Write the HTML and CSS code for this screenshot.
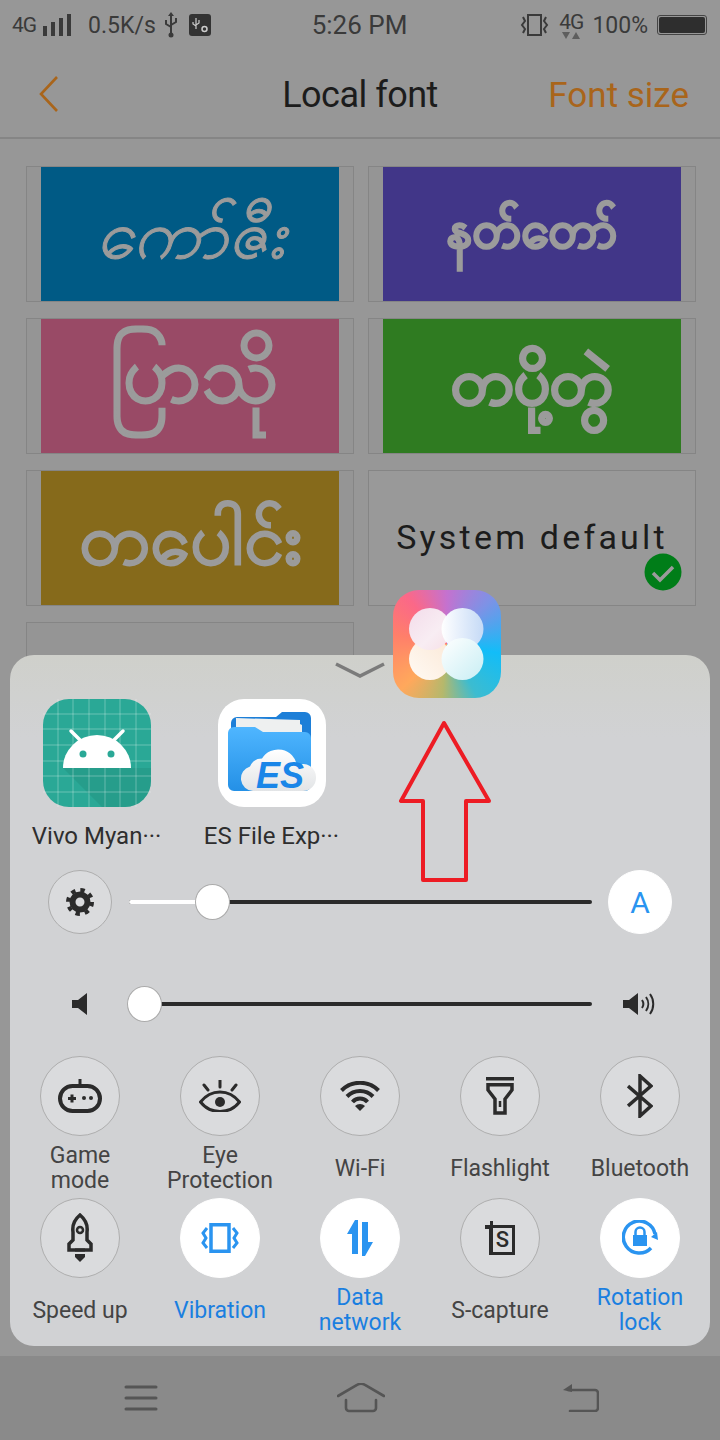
FILE: index.html
```html
<!DOCTYPE html>
<html lang="en">
<head>
    <meta charset="UTF-8">
    <meta name="viewport" content="width=device-width, initial-scale=1.0">
    <title>Local font</title>
    <link rel="stylesheet" href="styles.css">
</head>
<body>

<div class="screen">
    <!-- Status bar -->
    <div class="status-bar">
        <div class="status-left">
            <span class="net">4G</span>
            <svg class="signal" width="28" height="22" viewBox="0 0 28 22"><path d="M0 12h4v10H0zM8 8h4v14H8zM16 4h4v18h-4zM24 0h4v22h-4z" fill="#3a3a3a"/></svg>
            <span class="speed">0.5K/s</span>
            <svg class="usb" width="16" height="26" viewBox="0 0 16 26" fill="none" stroke="#3a3a3a" stroke-width="2"><path d="M8 3v19M3 8v4l5 3M13 6v4l-5 3"/><path d="M8 0l3 4H5z" fill="#3a3a3a" stroke="none"/><circle cx="8" cy="23" r="2.5" fill="#3a3a3a" stroke="none"/></svg>
            <svg class="usb-badge" width="22" height="22" viewBox="0 0 22 22"><rect width="22" height="22" rx="3" fill="#333"/><path d="M7 4v11M4 8v2l3 2M10 6v3l-3 2" fill="none" stroke="#ccc" stroke-width="1.2"/><circle cx="15.500" cy="15" r="2.500" fill="none" stroke="#ccc" stroke-width="1.500"/></svg>
        </div>
        <span class="clock">5:26 PM</span>
        <div class="status-right">
            <svg width="30" height="26" viewBox="0 0 30 26" fill="none" stroke="#3a3a3a" stroke-width="2"><rect x="8" y="3" width="13" height="20"/><path d="M3 5l2 4-3 4 3 4-2 4M26 5l-2 4 3 4-3 4 2 4"/></svg>
            <span class="net-stack"><span class="net">4G</span><span class="net-arrows"><i class="tri-down"></i><i class="tri-up"></i></span></span>
            <span class="speed">100%</span>
            <span class="battery"><span class="battery-fill"></span></span>
        </div>
    </div>

    <!-- Title bar -->
    <div class="title-bar">
        <svg class="back" width="20" height="36" viewBox="0 0 20 36" fill="none" stroke="#a9651b" stroke-width="2.600"><path d="M18 1L2 18l16 17"/></svg>
        <span class="title">Local font</span>
        <span class="title-action">Font size</span>
    </div>

    <!-- Font list -->
    <div class="font-grid">
        <div class="font-card"><div class="swatch swatch-blue"><span class="word word-script">ကော်ဇီး</span></div></div>
        <div class="font-card"><div class="swatch swatch-indigo"><span class="word word-serif">နတ်တော်</span></div></div>
        <div class="font-card"><div class="swatch swatch-rose"><span class="word word-round">ပြာသို</span></div></div>
        <div class="font-card"><div class="swatch swatch-green"><span class="word word-heavy">တပို့တွဲ</span></div></div>
        <div class="font-card"><div class="swatch swatch-ochre"><span class="word word-brush">တပေါင်း</span></div></div>
        <div class="font-card font-card-default">
            <span class="default-name">System default</span>
            <svg class="check" width="38" height="38" viewBox="0 0 38 38"><circle cx="19" cy="19" r="18.500" fill="#007d18"/><path d="M9 20l7 7 13-13" fill="none" stroke="#9b9b9b" stroke-width="3.500"/></svg>
        </div>
        <div class="font-card"></div>
    </div>

    <!-- Control centre sheet -->
    <div class="sheet">
        <div class="sheet-handle">
            <svg width="50" height="16" viewBox="0 0 50 16" fill="none" stroke="#7b7b7b" stroke-width="3.500"><path d="M1 2l24 12L49 2"/></svg>
        </div>

        <div class="recent-apps">
            <div class="recent-app">
                <svg class="app-icon" width="108" height="108" viewBox="0 0 108 108">
                    <rect width="108" height="108" rx="26" fill="#2aa896"/>
                    <path d="M20 69l39 39h23a26 26 0 0 0 26-26V69z" fill="#22917f" opacity=".5"/>
                    <path d="M15 0v108M30 0v108M46 0v108M62 0v108M77 0v108M93 0v108M0 15h108M0 30h108M0 46h108M0 62h108M0 77h108M0 93h108" stroke="#fff" stroke-opacity=".3" stroke-width="1"/>
                    <path d="M20 69a34 33 0 0 1 68 0z" fill="#fff"/>
                    <path d="M28 32l10 10M80 32L70 42" stroke="#fff" stroke-width="3.500" stroke-linecap="round"/>
                    <circle cx="40" cy="55" r="3.500" fill="#2aa896"/><circle cx="68" cy="55" r="3.500" fill="#2aa896"/>
                </svg>
                <span class="app-label">Vivo Myan···</span>
            </div>
            <div class="recent-app">
                <svg class="app-icon" width="108" height="108" viewBox="0 0 108 108">
                    <defs>
                        <linearGradient id="folderFront" x1="0" y1="0" x2="0" y2="1"><stop offset="0" stop-color="#4fb6ff"/><stop offset="1" stop-color="#2490e6"/></linearGradient>
                        <linearGradient id="cloudFill" x1="0" y1="0" x2="0" y2="1"><stop offset="0" stop-color="#fff"/><stop offset="1" stop-color="#e2e4e6"/></linearGradient>
                    </defs>
                    <rect width="108" height="108" rx="26" fill="#fff"/>
                    <path d="M13 24a6 6 0 0 1 6-6h39l6-5h23a6 6 0 0 1 6 6v21H13z" fill="#1d7fd8"/>
                    <path d="M18 19l64 2v4l2 1v9H18z" fill="#eef0f0"/>
                    <path d="M10 34a6 6 0 0 1 6-6h21l8 5h42a6 6 0 0 1 6 6v47a6 6 0 0 1-6 6H16a6 6 0 0 1-6-6z" fill="url(#folderFront)"/>
                    <path d="M35 92a12.500 12.500 0 0 1-3-24.500a13 13 0 0 1 12-8a19 19 0 0 1 35 7a13 13 0 0 1 19 12a13 13 0 0 1-13 13.500z" fill="url(#cloudFill)"/>
                    <text class="es-mark" x="38" y="89">ES</text>
                </svg>
                <span class="app-label">ES File Exp···</span>
            </div>
        </div>

        <div class="slider-row slider-row-light">
            <div class="round-btn round-btn-small">
                <svg width="30" height="30" viewBox="0 0 30 30" fill="none" stroke="#2b2b2b"><circle cx="15" cy="15" r="7.500" stroke-width="6"/><circle cx="15" cy="15" r="12" stroke-width="4" stroke-dasharray="4.420 5"/></svg>
            </div>
            <div class="track"><span class="track-done"></span><span class="thumb"></span></div>
            <div class="round-btn round-btn-small is-on"><span class="auto-a">A</span></div>
        </div>

        <div class="slider-row slider-row-volume">
            <div class="slider-end">
                <svg width="18" height="22" viewBox="0 0 18 22"><path d="M1 7h6l9-7v22l-9-7H1z" fill="#2b2b2b"/></svg>
            </div>
            <div class="track track-volume"><span class="thumb"></span></div>
            <div class="slider-end">
                <svg width="34" height="24" viewBox="0 0 34 24" fill="none" stroke="#2b2b2b" stroke-width="2"><path d="M0 8h6l9-7v22l-9-7H0z" fill="#2b2b2b" stroke="none"/><path d="M19 8a7 7 0 0 1 0 8M23 5a12 12 0 0 1 0 14M27 2a17 17 0 0 1 0 20"/></svg>
            </div>
        </div>

        <div class="toggle-grid">
            <div class="toggle">
                <div class="round-btn">
                    <svg width="44" height="34" viewBox="0 0 44 34" fill="none" stroke="#2b2b2b" stroke-width="4"><path d="M22 0v7" stroke-width="3"/><rect x="2" y="7" width="40" height="25" rx="12.500"/><path d="M10 19.500h8M14 15.500v8" stroke-width="3"/><circle cx="26" cy="19" r="2" fill="#2b2b2b" stroke="none"/><circle cx="33" cy="19" r="2" fill="#2b2b2b" stroke="none"/></svg>
                </div>
                <span class="toggle-label">Game<br>mode</span>
            </div>
            <div class="toggle">
                <div class="round-btn">
                    <svg width="42" height="32" viewBox="0 0 42 32" fill="none" stroke="#2b2b2b" stroke-width="3"><path d="M1.500 22C7 15 14 12 21 12s14 3 19.500 10C35 29 28 31.500 21 31.500S7 29 1.500 22z"/><circle cx="21" cy="22" r="5" fill="#2b2b2b" stroke="none"/><path d="M21 0v7M5 5l4 5M37 5l-4 5" stroke-linecap="round"/></svg>
                </div>
                <span class="toggle-label">Eye<br>Protection</span>
            </div>
            <div class="toggle">
                <div class="round-btn">
                    <svg width="40" height="30" viewBox="0 0 40 30" fill="none" stroke="#2b2b2b" stroke-width="4"><path d="M1.500 9.500a26 26 0 0 1 37 0M7 15.500a18 18 0 0 1 26 0M12.500 21a10 10 0 0 1 15 0"/><path d="M15 25a7 7 0 0 1 10 0l-5 5z" fill="#2b2b2b" stroke="none"/></svg>
                </div>
                <span class="toggle-label">Wi-Fi</span>
            </div>
            <div class="toggle">
                <div class="round-btn">
                    <svg width="28" height="38" viewBox="0 0 28 38" fill="none" stroke="#2b2b2b" stroke-width="3.500"><path d="M0 1.750h28" stroke-width="3.500"/><path d="M2 7.750v5.250l7 9v14h10V22l7-9V7.750z"/><path d="M14 24v6" stroke-width="2.500"/></svg>
                </div>
                <span class="toggle-label">Flashlight</span>
            </div>
            <div class="toggle">
                <div class="round-btn">
                    <svg width="26" height="44" viewBox="0 0 26 44" fill="none" stroke="#2b2b2b" stroke-width="3.500"><path d="M1 12l23 20-11 10V2l11 10L1 32"/></svg>
                </div>
                <span class="toggle-label">Bluetooth</span>
            </div>
            <div class="toggle">
                <div class="round-btn">
                    <svg width="26" height="50" viewBox="0 0 26 50" fill="none" stroke="#2b2b2b" stroke-width="3.500"><path d="M13 2C7 7 5 12 6 19v8l-4 4v6h22v-6l-4-4v-8c1-7-1-12-7-17z"/><path d="M8 37h10" stroke-width="3"/><circle cx="13" cy="17" r="3" stroke-width="2.500"/><path d="M8 41h10v3l-5 5-5-5z" fill="#2b2b2b" stroke="none"/></svg>
                </div>
                <span class="toggle-label">Speed up</span>
            </div>
            <div class="toggle is-on">
                <div class="round-btn">
                    <svg width="38" height="30" viewBox="0 0 38 30" fill="none" stroke="#2a94f0" stroke-width="3.500"><rect x="10" y="1.750" width="18" height="26.500"/><path d="M6 5L2 10l3 5-3 5 4 5M32 5l4 5-3 5 3 5-4 5" stroke-width="3"/></svg>
                </div>
                <span class="toggle-label">Vibration</span>
            </div>
            <div class="toggle is-on">
                <div class="round-btn">
                    <svg width="26" height="36" viewBox="0 0 26 36"><path d="M8 0L0 14h5v20h6V0zM18 36l8-14h-5V2h-6v34z" fill="#2a94f0"/></svg>
                </div>
                <span class="toggle-label">Data<br>network</span>
            </div>
            <div class="toggle">
                <div class="round-btn">
                    <svg width="30" height="34" viewBox="0 0 30 34"><path d="M0 4h5V0h3v4h22v30H4V8H0zM8 7v24h19V7z" fill="#2b2b2b"/><text class="s-mark" x="17.500" y="26">S</text></svg>
                </div>
                <span class="toggle-label">S-capture</span>
            </div>
            <div class="toggle is-on">
                <div class="round-btn">
                    <svg width="36" height="36" viewBox="0 0 36 36" fill="none" stroke="#2a94f0" stroke-width="3.500"><path d="M29 28a16 16 0 1 1 4-14"/><path d="M29 17l6-5 1 8z" fill="#2a94f0" stroke="none"/><rect x="11" y="15" width="14" height="11" fill="#2a94f0" stroke="none"/><path d="M13.500 15v-3a4.500 4.500 0 0 1 9 0v3" stroke-width="2.500"/></svg>
                </div>
                <span class="toggle-label">Rotation<br>lock</span>
            </div>
        </div>
    </div>

    <!-- App being dragged up to the sheet -->
    <svg class="drag-arrow" width="94" height="162" viewBox="0 0 94 162" fill="none" stroke="#ed1c24" stroke-width="4" stroke-linejoin="round"><path d="M46 3L3 81h22v79h43V81h23z"/></svg>
    <div class="drag-icon">
        <svg width="108" height="108" viewBox="0 0 108 108">
            <defs>
                <linearGradient id="petalA" x1="0" y1="0" x2="1" y2="1"><stop offset="0" stop-color="#f3dcea"/><stop offset=".6" stop-color="#f8edf3"/><stop offset="1" stop-color="#f6dfe6"/></linearGradient>
                <linearGradient id="petalB" x1="0" y1="0" x2="1" y2="0"><stop offset="0" stop-color="#fff"/><stop offset="1" stop-color="#c5daf6"/></linearGradient>
                <linearGradient id="petalC" x1="1" y1="0" x2="0" y2="1"><stop offset="0" stop-color="#fbe8d6"/><stop offset="1" stop-color="#fffaf4"/></linearGradient>
                <linearGradient id="petalD" x1="0" y1="0" x2="1" y2="1"><stop offset="0" stop-color="#fff"/><stop offset="1" stop-color="#c8eef4"/></linearGradient>
            </defs>
            <circle cx="37" cy="69" r="21" fill="url(#petalC)"/>
            <circle cx="37" cy="39" r="21" fill="url(#petalA)"/>
            <circle cx="69.500" cy="39" r="21" fill="url(#petalB)"/>
            <circle cx="69.500" cy="69" r="21" fill="url(#petalD)"/>
        </svg>
    </div>

    <!-- Navigation bar -->
    <div class="nav-bar">
        <svg width="34" height="26" viewBox="0 0 34 26" stroke="#555" stroke-width="3" stroke-linecap="round"><path d="M2 2h30M2 13h30M2 24h30"/></svg>
        <svg width="48" height="30" viewBox="0 0 48 30" fill="none" stroke="#555" stroke-width="2.600" stroke-linecap="round"><path d="M1 13L20 2a7 7 0 0 1 8 0l19 11M9 17v8a3 3 0 0 0 3 3h24a3 3 0 0 0 3-3v-8"/></svg>
        <svg class="nav-back" width="36" height="28" viewBox="0 0 36 28" fill="none" stroke="#555" stroke-width="2.600" stroke-linecap="round"><path d="M5 6h27a3 3 0 0 1 3 3v15a3 3 0 0 1-3 3H7"/><path d="M0 6l9-6v8z" fill="#555" stroke="none"/></svg>
    </div>
</div>

</body>
</html>
```

FILE: styles.css
```css
body {
    margin: 0;
    background: #979797;
    font-family: Roboto, "Noto Sans", sans-serif;
}

.screen {
    position: relative;
    width: 720px;
    height: 1440px;
    overflow: hidden;
    display: flex;
    flex-direction: column;
    background: #979797;
}

/* Status bar */
.status-bar {
    height: 50px;
    display: grid;
    grid-template-columns: 1fr auto 1fr;
    align-items: center;
    padding: 0 13px 0 12px;
    color: #3a3a3a;
}

.status-left, .status-right {
    display: flex;
    align-items: center;
}

.status-right {
    justify-content: flex-end;
    gap: 9px;
}

.net {
    font-size: 21px;
    letter-spacing: -1px;
}

.signal {
    margin-left: 7px;
}

.speed {
    margin-left: 17px;
    font-size: 23px;
}

.status-right .speed {
    margin-left: 0;
}

.usb {
    margin-left: 7px;
}

.usb-badge {
    margin-left: 10px;
}

.clock {
    font-size: 26px;
}

.net-stack {
    display: flex;
    flex-direction: column;
    align-items: center;
    line-height: 20px;
}

.net-arrows {
    display: flex;
    gap: 2px;
}

.tri-down, .tri-up {
    width: 0;
    height: 0;
    border-left: 4px solid transparent;
    border-right: 4px solid transparent;
}

.tri-down {
    border-top: 7px solid #5e5e5e;
}

.tri-up {
    border-bottom: 7px solid #5e5e5e;
}

.battery {
    width: 50px;
    height: 20px;
    box-sizing: border-box;
    border: 1px solid #444;
    border-radius: 3px;
    padding: 1px;
    display: flex;
}

.battery-fill {
    flex: 1;
    background: #2e2e2e;
    border-radius: 2px;
}

/* Title bar */
.title-bar {
    height: 89px;
    box-sizing: border-box;
    border-bottom: 2px solid #858585;
    display: grid;
    grid-template-columns: 1fr auto 1fr;
    align-items: center;
    padding: 3px 31px 0;
}

.back {
    justify-self: start;
    margin: -3px 0 0 8px;
}

.title {
    font-size: 36px;
    color: #1c1c1c;
    letter-spacing: -0.5px;
}

.title-action {
    justify-self: end;
    font-size: 35px;
    color: #a9651b;
}

/* Font list */
.font-grid {
    display: grid;
    grid-template-columns: 328px 328px;
    grid-auto-rows: 136px;
    gap: 16px 14px;
    padding: 27px 0 0 26px;
}

.font-card {
    position: relative;
    box-sizing: border-box;
    border: 1px solid #858585;
    padding: 0 14px;
    background: #959595;
}

.font-card-default {
    background: #999;
    padding: 0;
    display: flex;
    justify-content: center;
    padding-top: 46px;
}

.swatch {
    height: 100%;
    display: flex;
    align-items: center;
    justify-content: center;
}

.swatch-blue { background: #005a85; }
.swatch-indigo { background: #413688; }
.swatch-rose { background: #994a66; }
.swatch-green { background: #2f7b21; }
.swatch-ochre { background: #866a1b; }

.word {
    font-family: "Noto Sans", "DejaVu Sans", sans-serif;
    line-height: 1;
    color: #9b9b9b;
}

.word-script {
    font-size: 68px;
    font-style: italic;
    margin-bottom: 4px;
    -webkit-text-stroke: 1px #9b9b9b;
}

.word-serif {
    font-size: 50px;
    font-weight: bold;
    margin-bottom: 12px;
    -webkit-text-stroke: 2px #9b9b9b;
}

.word-round {
    font-size: 80px;
    margin: 0 0 30px 8px;
    -webkit-text-stroke: 3px #9b9b9b;
}

.word-heavy {
    font-size: 64px;
    font-weight: bold;
    margin-bottom: 12px;
    -webkit-text-stroke: 2px #9b9b9b;
}

.word-brush {
    font-size: 72px;
    margin-bottom: 4px;
    -webkit-text-stroke: 3px #9b9b9b;
}

.default-name {
    font-size: 34px;
    letter-spacing: 3.2px;
    color: #1c1c1c;
}

.check {
    position: absolute;
    right: 13px;
    bottom: 14px;
}

/* Sheet */
.sheet {
    position: absolute;
    left: 10px;
    top: 655px;
    width: 700px;
    height: 691px;
    box-sizing: border-box;
    border-radius: 24px;
    background: linear-gradient(#cfd0cb, #d1d2d4 12%);
}

.sheet-handle {
    height: 44px;
    box-sizing: border-box;
    padding-top: 7px;
    display: flex;
    justify-content: center;
    align-items: flex-start;
}

.recent-apps {
    display: grid;
    grid-template-columns: repeat(4, 175px);
    margin-left: -1px;
}

.recent-app {
    display: flex;
    flex-direction: column;
    align-items: center;
}

.app-icon {
    display: block;
}

.app-label {
    margin-top: 14px;
    font-size: 24px;
    line-height: 30px;
    color: #2e2e2e;
    white-space: nowrap;
}

.es-mark {
    font-family: "Liberation Sans", sans-serif;
    font-weight: bold;
    font-style: italic;
    font-size: 36px;
    fill: #1a86e8;
}

.s-mark {
    font-family: Roboto, sans-serif;
    font-size: 22px;
    font-weight: 500;
    text-anchor: middle;
    fill: #2b2b2b;
}

/* Sliders */
.slider-row {
    display: flex;
    align-items: center;
    gap: 17px;
    height: 64px;
    padding-left: 38px;
}

.slider-row-light {
    margin-top: 19px;
}

.slider-row-volume {
    margin-top: 38px;
}

.track {
    position: relative;
    width: 463px;
    height: 4px;
    margin-right: -1px;
    border-radius: 2px;
    background: #2b2b2b;
}

.track-done {
    position: absolute;
    left: 0;
    top: 0;
    bottom: 0;
    width: 83px;
    border-radius: 2px;
    background: #fff;
}

.thumb {
    position: absolute;
    left: 66px;
    top: -16px;
    width: 35px;
    height: 36px;
    box-sizing: border-box;
    border: 1px solid #aaa;
    border-radius: 50%;
    background: #fff;
}

.track-volume {
    background: linear-gradient(90deg, transparent 15px, #2b2b2b 15px);
}

.track-volume .thumb {
    left: -2px;
}

.slider-end {
    width: 64px;
    display: flex;
    align-items: center;
    justify-content: center;
}

.round-btn {
    width: 80px;
    height: 80px;
    box-sizing: border-box;
    border: 1px solid #aeaeae;
    border-radius: 50%;
    background: #dadbdd;
    display: flex;
    align-items: center;
    justify-content: center;
}

.round-btn-small {
    width: 64px;
    height: 64px;
}

.is-on.round-btn, .is-on .round-btn {
    background: #fff;
    border-color: #fff;
}

.auto-a {
    font-size: 30px;
    color: #2a94f0;
}

/* Toggles */
.toggle-grid {
    display: grid;
    grid-template-columns: repeat(5, 140px);
    row-gap: 5px;
    margin-top: 20px;
}

.toggle {
    display: flex;
    flex-direction: column;
    align-items: center;
}

.toggle-label {
    height: 50px;
    margin-top: 7px;
    display: flex;
    align-items: center;
    text-align: center;
    font-size: 23px;
    line-height: 25px;
    color: #444;
    white-space: nowrap;
}

.is-on .toggle-label {
    color: #1a7fe0;
}

/* Dragged app */
.drag-icon {
    position: absolute;
    left: 393px;
    top: 590px;
    width: 108px;
    height: 108px;
    border-radius: 26px;
    background: conic-gradient(#c472cf 0deg, #7d92e6 45deg, #12bdf8 100deg, #3cbcd0 150deg, #b5b86c 185deg, #ffa85c 225deg, #ff7f6a 280deg, #fb6888 320deg, #c472cf 360deg);
}

.drag-arrow {
    position: absolute;
    left: 398px;
    top: 720px;
}

/* Navigation bar */
.nav-bar {
    margin-top: auto;
    height: 84px;
    box-sizing: border-box;
    padding-left: 2px;
    background: #8a8a8a;
    display: flex;
    align-items: center;
    justify-content: center;
    gap: 179px;
}

.nav-back {
    margin-left: -1px;
}
```
